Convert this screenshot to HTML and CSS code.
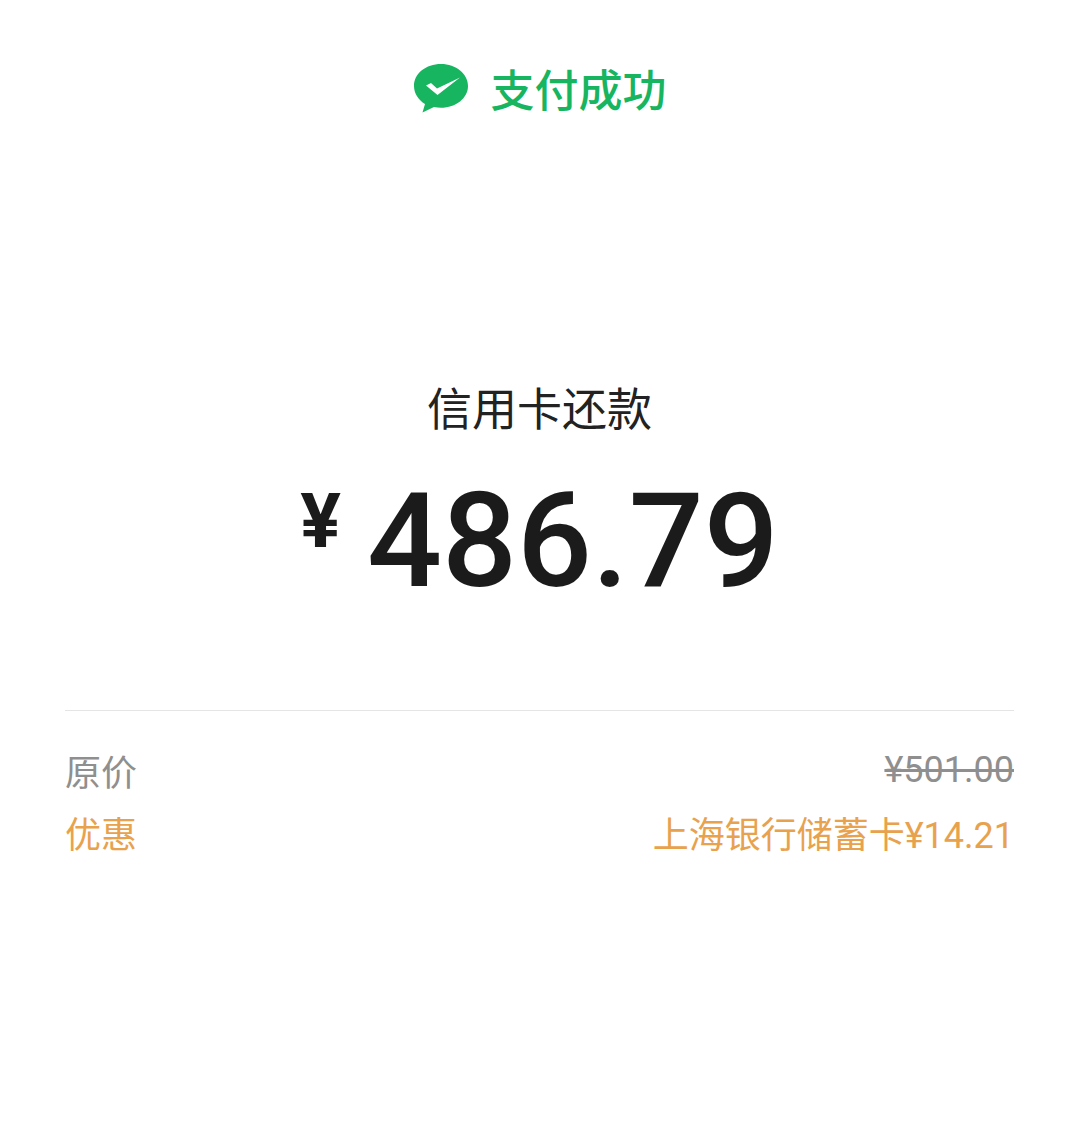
FILE: index.html
```html
<!DOCTYPE html>
<html lang="zh-CN">

<head>
    <meta charset="UTF-8">
    <meta name="viewport" content="width=device-width, initial-scale=1.0">
    <title>支付成功</title>
    <link rel="stylesheet" href="styles.css">
</head>

<body>
    <div id="app">
        <div class="status">
            <svg class="status-icon" viewBox="0 0 56 50" width="56" height="50">
                <path fill="#17b55f" d="M28 1C13 1 1 10.500 1 23c0 7.500 4.500 14 11 18l-2.500 8.500 11.500-5.500c2.300 .5 4.600 .8 7 .8 15 0 27-9.800 27-21.800S43 1 28 1z" />
                <path fill="#fff" d="M13 22.500l5-2.500 6 5.500L47 14.500 24.500 32z" />
            </svg>
            <span class="status-text">支付成功</span>
        </div>
        <div class="merchant">信用卡还款</div>
        <div class="amount"><span class="currency">¥</span><span class="value">486.79</span></div>
        <div class="details">
            <div class="row grey">
                <span>原价</span>
                <s class="price">¥501.00</s>
            </div>
            <div class="row orange">
                <span>优惠</span>
                <span>上海银行储蓄卡¥14.21</span>
            </div>
        </div>
    </div>
</body>

</html>
```

FILE: styles.css
```css
body {
    font-family: "Roboto", "Noto Sans CJK SC", sans-serif;
    margin: 0;
    background-color: #fff;
}

#app {
    height: 1142px;
    padding: 60px 65px 0;
    box-sizing: border-box;
}

.status {
    display: flex;
    justify-content: center;
    align-items: center;
    gap: 22px;
    height: 56px;
    color: #17b55f;
}

.status-text {
    font-size: 44px;
    font-weight: 500;
}

.merchant {
    margin-top: 262px;
    height: 66px;
    line-height: 66px;
    text-align: center;
    font-size: 45px;
    color: #222;
}

.amount {
    display: flex;
    justify-content: center;
    align-items: flex-start;
    gap: 26px;
    margin-top: 22px;
    height: 150px;
    color: #1b1b1b;
    font-weight: 500;
}

.currency {
    font-size: 76px;
    line-height: 110px;
    font-weight: 700;
}

.value {
    font-size: 132px;
    line-height: 150px;
}

.details {
    margin-top: 94px;
    padding-top: 28px;
    border-top: 1px solid #e5e5e5;
}

.row {
    display: flex;
    justify-content: space-between;
    align-items: center;
    height: 62px;
    font-size: 36px;
}

.grey {
    color: #8f8f8f;
}

.orange {
    color: #e8a24d;
}
```
